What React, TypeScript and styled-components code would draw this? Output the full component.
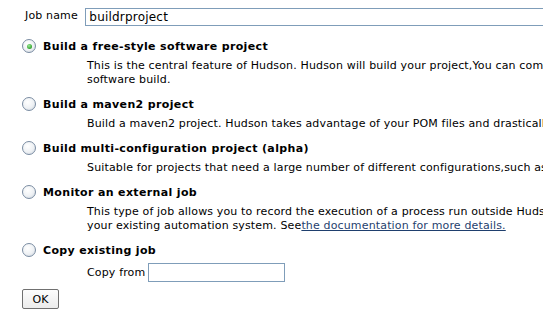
import * as React from "react";
import { FC } from "react";
import styled, { createGlobalStyle } from "styled-components";

const GlobalStyle = createGlobalStyle`
  body {
    margin: 0;
    background: #fff;
    font-family: "DejaVu Sans", Verdana, sans-serif;
    font-size: 11px;
    letter-spacing: 0.15px;
    color: #000;
    overflow: hidden;
  }
`;

type JobType = {
  id: string;
  title: string;
  description: React.ReactNode;
};

const Form = styled.div`
  padding: 8px 0 0 22px;
`;

const NameRow = styled.div`
  display: flex;
  align-items: center;
  margin-bottom: 10px;
`;

const NameLabel = styled.span`
  width: 65px;
  padding-left: 3px;
  box-sizing: border-box;
  position: relative;
  top: -2px;
`;

const NameInput = styled.input`
  width: 470px;
  height: 18px;
  box-sizing: border-box;
  border: 1px solid #7f9db9;
  border-right: none;
  padding: 0 3px;
  font: 12px "DejaVu Sans", Verdana, sans-serif;
  letter-spacing: 0.2px;
  color: #000;
  outline: none;
`;

const Option = styled.div`
  margin-bottom: 7px;
`;

const OptionHeader = styled.div`
  display: flex;
  align-items: center;
  height: 20px;
`;

const Radio = styled.span<{ checked: boolean }>`
  position: relative;
  flex: none;
  width: 12px;
  height: 12px;
  margin: 0 7px 0 0;
  border: 1px solid #7a8ca2;
  border-radius: 50%;
  background: radial-gradient(circle at 40% 35%, #ffffff 0%, #eef1f4 55%, #c8d0da 100%);
  &::after {
    content: "";
    display: ${(p) => (p.checked ? "block" : "none")};
    position: absolute;
    left: 3.5px;
    top: 3.5px;
    width: 5px;
    height: 5px;
    border-radius: 50%;
    background: radial-gradient(circle at 40% 35%, #9ee89a 0%, #3fae3a 60%, #1f7a1c 100%);
  }
`;

const OptionTitle = styled.span`
  font-weight: bold;
  letter-spacing: 0.35px;
  white-space: nowrap;
`;

const Description = styled.div`
  padding: 3px 0 0 65px;
  line-height: 14px;
  white-space: nowrap;
`;

const DocLink = styled.a`
  color: #1f3f6e;
  text-decoration: underline;
`;

const CopyRow = styled.div`
  display: flex;
  align-items: center;
  gap: 3px;
  padding: 3px 0 0 65px;
`;

const CopyInput = styled.input`
  width: 137px;
  height: 19px;
  box-sizing: border-box;
  border: 1px solid #7f9db9;
  outline: none;
`;

const OkButton = styled.button`
  display: block;
  width: 37px;
  height: 20px;
  margin-top: 2px;
  padding: 0;
  border: 1px solid #707070;
  border-radius: 2px;
  background: linear-gradient(#fdfdfd, #ececec);
  font: 11px "DejaVu Sans", Verdana, sans-serif;
  color: #000;
`;

const jobTypes: JobType[] = [
  {
    id: "free",
    title: "Build a free-style software project",
    description: (
      <>
        This is the central feature of Hudson. Hudson will build your project,You can combine any SCM with any build system, and this can be even used for something other than
        <br />
        software build.
      </>
    ),
  },
  {
    id: "maven2",
    title: "Build a maven2 project",
    description:
      "Build a maven2 project. Hudson takes advantage of your POM files and drastically reduces the configuration.",
  },
  {
    id: "matrix",
    title: "Build multi-configuration project (alpha)",
    description:
      "Suitable for projects that need a large number of different configurations,such as testing on multiple environments, platform-specific builds, etc.",
  },
  {
    id: "external",
    title: "Monitor an external job",
    description: (
      <>
        This type of job allows you to record the execution of a process run outside Hudson, even on a remote machine. This is designed so that you can use Hudson as a dashboard of
        <br />
        your existing automation system. See
        <DocLink href="#">the documentation for more details.</DocLink>
      </>
    ),
  },
];

const App: FC = () => {
  const selected = "free";
  return (
    <>
      <GlobalStyle />
      <Form>
        <NameRow>
          <NameLabel>Job name</NameLabel>
          <NameInput defaultValue="buildrproject" />
        </NameRow>
        {jobTypes.map((job) => (
          <Option key={job.id}>
            <OptionHeader>
              <Radio checked={job.id === selected} />
              <OptionTitle>{job.title}</OptionTitle>
            </OptionHeader>
            <Description>{job.description}</Description>
          </Option>
        ))}
        <Option>
          <OptionHeader>
            <Radio checked={false} />
            <OptionTitle>Copy existing job</OptionTitle>
          </OptionHeader>
          <CopyRow>
            <span>Copy from</span>
            <CopyInput />
          </CopyRow>
        </Option>
        <OkButton>OK</OkButton>
      </Form>
    </>
  );
};

export default App;
